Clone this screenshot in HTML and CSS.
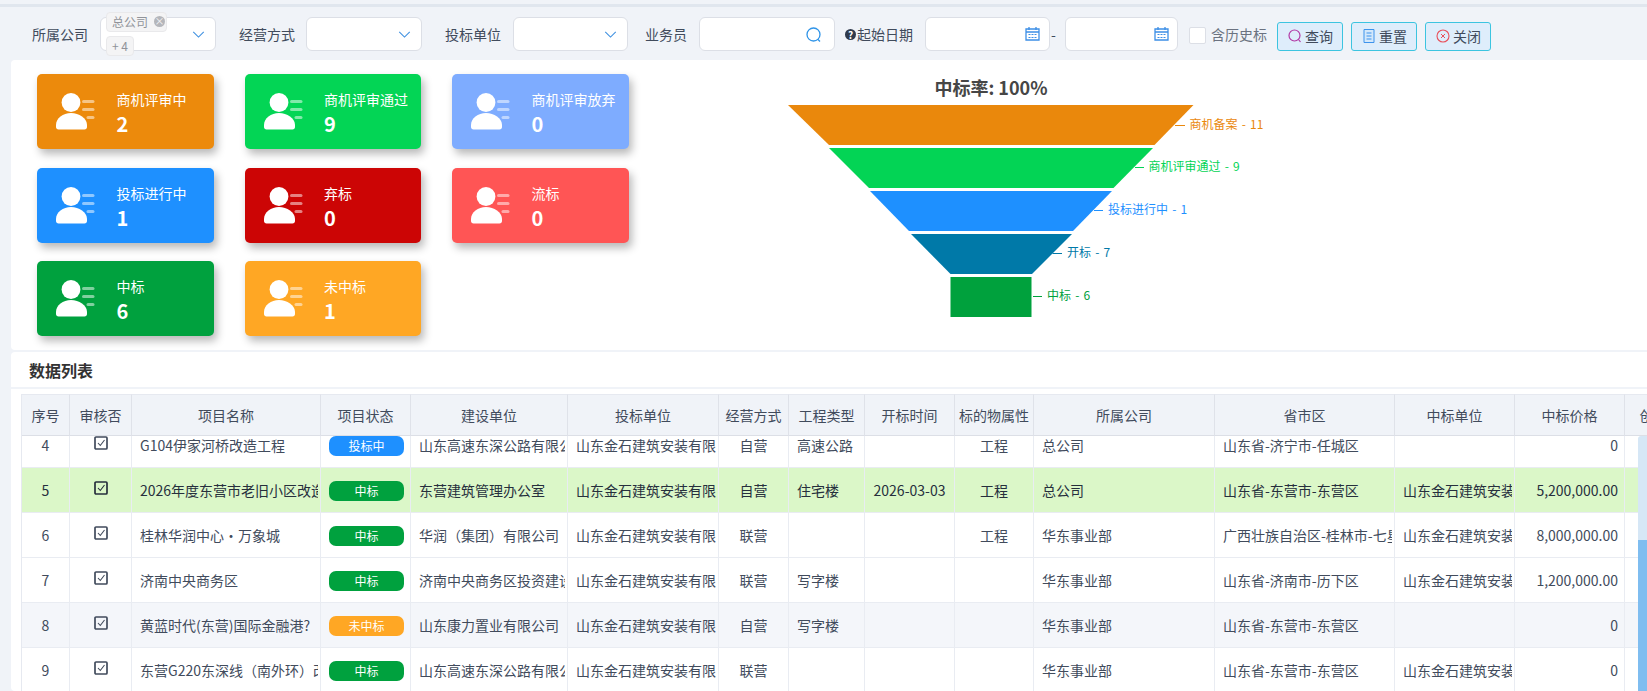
FILE: index.html
```html
<!DOCTYPE html>
<html lang="zh-CN">
  <head>
    <meta charset="utf-8" />
    <title>商机统计</title>
    <meta name="viewport" content="width=device-width, initial-scale=1" />
    <link rel="stylesheet" href="styles.css">
  </head>
  <body>
    <svg class="defs" width="0" height="0">
      <symbol id="person" viewBox="0 0 39 37">
        <circle cx="15" cy="9.5" r="9.4" fill="#fff" />
        <path d="M0 32C0 25 7 20 15 20s16 5 16 12v2c0 1.500-1 2.500-2.500 2.500H2.500C1 36.500 0 35.500 0 34z" fill="#fff" />
        <rect x="26" y="7" width="12.500" height="3" rx="1.500" fill="#fff" opacity=".5" />
        <rect x="26" y="15" width="12.500" height="3" rx="1.500" fill="#fff" opacity=".5" />
        <rect x="30.500" y="23" width="8" height="3" rx="1.500" fill="#fff" opacity=".5" />
      </symbol>
      <symbol id="chevron" viewBox="0 0 14 8">
        <path d="M1 1l6 6 6-6" fill="none" stroke="currentColor" stroke-width="1.200" />
      </symbol>
      <symbol id="calendar" viewBox="0 0 15 15">
        <path d="M1 3h13v11H1zM1 6h13M4 1v3M11 1v3" fill="none" stroke="#3d8fe6" stroke-width="1.300" />
        <path d="M3.500 8.500h8M3.500 11.500h8" stroke="#3d8fe6" stroke-width="1" stroke-dasharray="2 1" />
      </symbol>
      <symbol id="checked" viewBox="0 0 14 14">
        <rect x="1" y="1" width="12" height="12" rx="1" fill="none" stroke="currentColor" stroke-width="1.700" />
        <path d="M4 7l2.300 2.500L10.500 4" fill="none" stroke="currentColor" stroke-width="1.100" />
      </symbol>
    </svg>

    <div class="topline"></div>

    <form class="filters">
      <label class="flabel w-company">所属公司</label>
      <div class="field select multi">
        <span class="tag tag-first">总公司<i class="tag-x">×</i></span>
        <span class="tag tag-more">+ 4</span>
        <svg class="chevron"><use href="#chevron" /></svg>
      </div>
      <label class="flabel w-mode">经营方式</label>
      <div class="field select mode"><svg class="chevron"><use href="#chevron" /></svg></div>
      <label class="flabel w-bid">投标单位</label>
      <div class="field select bid"><svg class="chevron"><use href="#chevron" /></svg></div>
      <label class="flabel w-sales">业务员</label>
      <div class="field sales">
        <svg class="field-icon" width="16" height="16" viewBox="0 0 16 16">
          <circle cx="7.500" cy="7.500" r="6.500" fill="none" stroke="#2f94e8" stroke-width="1.300" />
          <path d="M12 12.500l2 2" stroke="#2f94e8" stroke-width="1.300" />
        </svg>
      </div>
      <span class="help">?</span>
      <label class="flabel w-date">起始日期</label>
      <div class="field date1"><svg class="field-icon" width="15" height="15"><use href="#calendar" /></svg></div>
      <span class="dash">-</span>
      <div class="field date2"><svg class="field-icon" width="15" height="15"><use href="#calendar" /></svg></div>
      <span class="check-box"></span>
      <span class="check-label">含历史标</span>
      <button type="button" class="btn">
        <svg width="14" height="14" viewBox="0 0 14 14"><circle cx="6.500" cy="6.500" r="5.500" fill="none" stroke="#b23aa6" stroke-width="1.200" /><path d="M10.500 10.500l2 2.500" stroke="#b23aa6" stroke-width="1.200" /></svg>查询
      </button>
      <button type="button" class="btn">
        <svg width="14" height="14" viewBox="0 0 14 14"><path d="M2 .5h10v13H2z" fill="#d3e8fb" stroke="#3d93ec" /><path d="M4.500 4h5M4.500 7h5M4.500 10h5" stroke="#3d93ec" /></svg>重置
      </button>
      <button type="button" class="btn">
        <svg width="14" height="14" viewBox="0 0 14 14"><circle cx="7" cy="7" r="6" fill="none" stroke="#e8505b" stroke-width="1.100" /><path d="M5 5l4 4M9 5l-4 4" stroke="#e8505b" /></svg>关闭
      </button>
    </form>

    <section class="panel stats">
      <div class="cards">
        <div class="card c-orange"><svg class="card-icon"><use href="#person" /></svg><div class="card-text"><div class="card-title">商机评审中</div><div class="card-num">2</div></div></div>
        <div class="card c-green"><svg class="card-icon"><use href="#person" /></svg><div class="card-text"><div class="card-title">商机评审通过</div><div class="card-num">9</div></div></div>
        <div class="card c-sky"><svg class="card-icon"><use href="#person" /></svg><div class="card-text"><div class="card-title">商机评审放弃</div><div class="card-num">0</div></div></div>
        <div class="card c-blue"><svg class="card-icon"><use href="#person" /></svg><div class="card-text"><div class="card-title">投标进行中</div><div class="card-num">1</div></div></div>
        <div class="card c-red"><svg class="card-icon"><use href="#person" /></svg><div class="card-text"><div class="card-title">弃标</div><div class="card-num">0</div></div></div>
        <div class="card c-coral"><svg class="card-icon"><use href="#person" /></svg><div class="card-text"><div class="card-title">流标</div><div class="card-num">0</div></div></div>
        <div class="card c-win"><svg class="card-icon"><use href="#person" /></svg><div class="card-text"><div class="card-title">中标</div><div class="card-num">6</div></div></div>
        <div class="card c-amber"><svg class="card-icon"><use href="#person" /></svg><div class="card-text"><div class="card-title">未中标</div><div class="card-num">1</div></div></div>
      </div>

      <!-- funnel: viewBox uses page coordinates -->
      <svg class="funnel" width="1017" height="290" viewBox="630 60 1017 290">
        <text class="funnel-title" x="991" y="95" text-anchor="middle">中标率: 100%</text>
        <polygon points="788,105 1193.500,105 1154.500,145 829,145" fill="#ea880c" />
        <polygon points="829,148 1153,148 1113.500,188 869,188" fill="#03d455" />
        <polygon points="870,191 1112,191 1073,231 909,231" fill="#1e90ff" />
        <polygon points="911,234 1072,234 1032,274 950.500,274" fill="#0079a8" />
        <rect x="950.500" y="277" width="81" height="40" fill="#00a13d" />
        <g class="funnel-label">
          <path d="M1175 125.500h10" stroke="#ea880c" /><text x="1189.500" y="129" fill="#ea880c">商机备案 - 11</text>
          <path d="M1135 167.500h9" stroke="#03d455" /><text x="1148.500" y="171" fill="#03d455">商机评审通过 - 9</text>
          <path d="M1094 210.500h9" stroke="#1e90ff" /><text x="1108" y="214" fill="#1e90ff">投标进行中 - 1</text>
          <path d="M1052.500 253.500h9.500" stroke="#0079a8" /><text x="1067" y="257" fill="#0079a8">开标 - 7</text>
          <path d="M1033 296.500h9" stroke="#00a13d" /><text x="1047" y="300" fill="#00a13d">中标 - 6</text>
        </g>
      </svg>
    </section>

    <section class="panel list">
      <h3 class="list-title">数据列表</h3>
      <div class="grid">
        <table class="grid-table">
          <colgroup>
            <col class="c1" /><col class="c2" /><col class="c3" /><col class="c4" /><col class="c5" /><col class="c6" /><col class="c7" /><col class="c8" /><col class="c9" /><col class="c10" /><col class="c11" /><col class="c12" /><col class="c13" /><col class="c14" /><col class="c15" />
          </colgroup>
          <thead>
            <tr>
              <th>序号</th><th>审核否</th><th>项目名称</th><th>项目状态</th><th>建设单位</th><th>投标单位</th><th>经营方式</th><th>工程类型</th><th>开标时间</th><th>标的物属性</th><th>所属公司</th><th>省市区</th><th>中标单位</th><th>中标价格</th><th>创建时间</th>
            </tr>
          </thead>
        </table>
        <div class="grid-body">
          <table class="grid-table scrolled">
            <colgroup>
              <col class="c1" /><col class="c2" /><col class="c3" /><col class="c4" /><col class="c5" /><col class="c6" /><col class="c7" /><col class="c8" /><col class="c9" /><col class="c10" /><col class="c11" /><col class="c12" /><col class="c13" /><col class="c14" /><col class="c15" />
            </colgroup>
            <tbody>
              <tr>
                <td class="mid">4</td><td class="mid"><svg class="tick"><use href="#checked" /></svg></td><td>G104伊家河桥改造工程</td><td class="mid"><span class="badge b-blue">投标中</span></td><td>山东高速东深公路有限公司</td><td>山东金石建筑安装有限公司</td><td class="mid">自营</td><td>高速公路</td><td class="mid"></td><td class="mid">工程</td><td>总公司</td><td>山东省-济宁市-任城区</td><td></td><td class="num">0</td><td></td>
              </tr>
              <tr class="current">
                <td class="mid">5</td><td class="mid"><svg class="tick"><use href="#checked" /></svg></td><td>2026年度东营市老旧小区改造工程</td><td class="mid"><span class="badge b-green">中标</span></td><td>东营建筑管理办公室</td><td>山东金石建筑安装有限公司</td><td class="mid">自营</td><td>住宅楼</td><td class="mid">2026-03-03</td><td class="mid">工程</td><td>总公司</td><td>山东省-东营市-东营区</td><td>山东金石建筑安装有限公司</td><td class="num">5,200,000.00</td><td></td>
              </tr>
              <tr>
                <td class="mid">6</td><td class="mid"><svg class="tick"><use href="#checked" /></svg></td><td>桂林华润中心・万象城</td><td class="mid"><span class="badge b-green">中标</span></td><td>华润（集团）有限公司</td><td>山东金石建筑安装有限公司</td><td class="mid">联营</td><td></td><td class="mid"></td><td class="mid">工程</td><td>华东事业部</td><td>广西壮族自治区-桂林市-七星区</td><td>山东金石建筑安装有限公司</td><td class="num">8,000,000.00</td><td></td>
              </tr>
              <tr>
                <td class="mid">7</td><td class="mid"><svg class="tick"><use href="#checked" /></svg></td><td>济南中央商务区</td><td class="mid"><span class="badge b-green">中标</span></td><td>济南中央商务区投资建设有限公司</td><td>山东金石建筑安装有限公司</td><td class="mid">联营</td><td>写字楼</td><td class="mid"></td><td class="mid"></td><td>华东事业部</td><td>山东省-济南市-历下区</td><td>山东金石建筑安装有限公司</td><td class="num">1,200,000.00</td><td></td>
              </tr>
              <tr class="stripe">
                <td class="mid">8</td><td class="mid"><svg class="tick"><use href="#checked" /></svg></td><td>黄蓝时代(东营)国际金融港?</td><td class="mid"><span class="badge b-amber">未中标</span></td><td>山东康力置业有限公司</td><td>山东金石建筑安装有限公司</td><td class="mid">自营</td><td>写字楼</td><td class="mid"></td><td class="mid"></td><td>华东事业部</td><td>山东省-东营市-东营区</td><td></td><td class="num">0</td><td></td>
              </tr>
              <tr>
                <td class="mid">9</td><td class="mid"><svg class="tick"><use href="#checked" /></svg></td><td>东营G220东深线（南外环）改建工程</td><td class="mid"><span class="badge b-green">中标</span></td><td>山东高速东深公路有限公司</td><td>山东金石建筑安装有限公司</td><td class="mid">联营</td><td></td><td class="mid"></td><td class="mid"></td><td>华东事业部</td><td>山东省-东营市-东营区</td><td>山东金石建筑安装有限公司</td><td class="num">0</td><td></td>
              </tr>
            </tbody>
          </table>
          <div class="scroll-track"><div class="scroll-thumb"></div></div>
        </div>
      </div>
    </section>
  </body>
</html>
```

FILE: styles.css
```css
html,
body {
  height: 691px;
  overflow: hidden;
}
body {
  margin: 0;
  background: #f0f3f8;
  font-family: "Noto Sans CJK SC", "Noto Sans", sans-serif;
  font-size: 14px;
  color: #414b5c;
}
.defs {
  position: absolute;
}
.topline {
  height: 3px;
  margin-top: 4px;
  background: #e0e6ee;
}

/* filter bar */
.filters {
  display: flex;
  align-items: flex-start;
  height: 53px;
  padding: 10px 0 0 32px;
  box-sizing: border-box;
}
.flabel {
  line-height: 34px;
  white-space: nowrap;
}
.w-company { margin-right: 12px; }
.w-mode { margin: 0 11px 0 23px; }
.w-bid { margin: 0 12px 0 23px; }
.w-sales { margin: 0 12px 0 17px; }
.field {
  position: relative;
  height: 34px;
  box-sizing: border-box;
  background: #fff;
  border: 1px solid #dcdfe6;
  border-radius: 6px;
  flex: none;
}
.multi { width: 116px; }
.mode { width: 116px; }
.bid { width: 115px; }
.sales { width: 136px; }
.date1 { width: 125px; margin-left: 12px; }
.date2 { width: 113px; }
.chevron {
  position: absolute;
  right: 10px;
  top: 13px;
  width: 13px;
  height: 7px;
  color: #3d8fe0;
}
.field-icon {
  position: absolute;
  top: 9px;
  right: 11px;
}
.sales .field-icon { right: 12px; }
.date1 .field-icon { right: 9px; top: 8px; }
.date2 .field-icon { right: 8px; top: 8px; }
.tag {
  position: absolute;
  left: 5px;
  box-sizing: border-box;
  height: 20px;
  line-height: 18px;
  font-size: 12px;
  color: #909399;
  background: #f4f4f5;
  border: 1px solid #e9e9eb;
  border-radius: 4px;
}
.tag-first {
  top: -6px;
  width: 61px;
  padding-left: 5px;
}
.tag-more {
  top: 18px;
  width: 28px;
  text-align: center;
}
.tag-x {
  position: absolute;
  right: 1px;
  top: 3px;
  width: 11px;
  height: 11px;
  line-height: 10px;
  font-size: 10px;
  font-style: normal;
  text-align: center;
  color: #f4f4f5;
  background: #b4b6bb;
  border-radius: 50%;
}
.help {
  flex: none;
  width: 11px;
  height: 11px;
  margin: 12px 1px 0 10px;
  line-height: 11px;
  font-size: 10px;
  font-weight: 700;
  text-align: center;
  color: #fff;
  background: #2f3a4c;
  border-radius: 50%;
}
.dash {
  width: 15px;
  line-height: 34px;
  padding-left: 1px;
  box-sizing: border-box;
}
.check-box {
  flex: none;
  width: 17px;
  height: 17px;
  margin: 10px 5px 0 11px;
  box-sizing: border-box;
  background: #fff;
  border: 1px solid #dcdfe6;
  border-radius: 2px;
}
.check-label {
  line-height: 35px;
  color: #6b7280;
  white-space: nowrap;
  margin-right: 10px;
}
.btn {
  display: flex;
  align-items: center;
  justify-content: center;
  gap: 3px;
  flex: none;
  width: 66px;
  height: 29px;
  margin: 5px 8px 0 0;
  padding: 0 0 2px 1px;
  font: inherit;
  color: #414b5c;
  background: #deedfb;
  border: 1px solid #3cc4e0;
  border-radius: 3px;
}

/* panels */
.panel {
  margin-left: 11px;
  background: #fff;
  border-radius: 4px 0 0 4px;
}
.stats {
  display: flex;
  height: 290px;
  margin-bottom: 2px;
}
.cards {
  display: grid;
  grid-template-columns: repeat(3, 176.5px);
  grid-auto-rows: 75px;
  gap: 18.5px 31px;
  align-content: start;
  flex: none;
  width: 593px;
  padding: 14px 0 0 26px;
}
.card {
  display: flex;
  align-items: center;
  gap: 21.5px;
  padding-left: 19px;
  color: #fff;
  border-radius: 5px;
  box-shadow: 3px 5px 9px rgba(0, 0, 0, 0.28);
}
.card-icon {
  flex: none;
  width: 39px;
  height: 37px;
}
.card-text {
  padding-top: 5px;
  white-space: nowrap;
}
.card-title {
  line-height: 20px;
}
.card-num {
  line-height: 30px;
  font-size: 20px;
  font-weight: 700;
}
.c-orange { background: #ec8a0c; }
.c-green { background: #03d555; }
.c-sky { background: #7eacff; }
.c-blue { background: #1e90ff; }
.c-red { background: #cc0505; }
.c-coral { background: #ff5555; }
.c-win { background: #00a13e; }
.c-amber { background: #ffa724; }

.funnel {
  flex: none;
}
.funnel-title {
  font-size: 18px;
  font-weight: 700;
  fill: #464646;
}
.funnel-label {
  font-size: 12px;
  word-spacing: 1.5px;
}

/* data table */
.list {
  height: 339px;
  overflow: hidden;
}
.list-title {
  margin: 0;
  height: 35px;
  padding-left: 18px;
  line-height: 36px;
  font-size: 16px;
  font-weight: 700;
  color: #333;
  border-bottom: 2px solid #f0f3f8;
  box-sizing: content-box;
}
.grid {
  margin: 5px 0 0 10px;
  overflow: hidden;
  border-left: 1px solid #e6e9f0;
}
.grid-table {
  table-layout: fixed;
  width: 1689px;
  border-collapse: separate;
  border-spacing: 0;
}
.c1 { width: 48px; }
.c2 { width: 62px; }
.c3 { width: 189px; }
.c4 { width: 90px; }
.c5 { width: 157px; }
.c6 { width: 151px; }
.c7 { width: 70px; }
.c8 { width: 76px; }
.c9 { width: 90px; }
.c10 { width: 79px; }
.c11 { width: 181px; }
.c12 { width: 180px; }
.c13 { width: 120px; }
.c14 { width: 110px; }
.c15 { width: 86px; }
th {
  height: 40px;
  padding: 0;
  font-weight: 400;
  color: #414b5c;
  background: #f0f3f8;
  border-top: 1px solid #e6e9f0;
  border-right: 1px solid #dfe2e9;
  border-bottom: 1px solid #dcdfe6;
  white-space: nowrap;
  overflow: hidden;
}
td {
  position: relative;
  height: 44px;
  padding: 0 1px 0 8px;
  box-sizing: border-box;
  background: #fff;
  border-right: 1px solid #e9ecf2;
  border-bottom: 1px solid #e9ecf2;
  white-space: nowrap;
  overflow: hidden;
}
/* keeps clipped text off the column rule */
td::after {
  content: "";
  position: absolute;
  top: 0;
  right: 0;
  bottom: 0;
  width: 2px;
  background: inherit;
}
tbody tr {
  height: 45px;
}
td.mid {
  padding-left: 1px;
  text-align: center;
}
td.num {
  padding-right: 6px;
  text-align: right;
}
.current td {
  color: #262f3d;
  background: #dbf7c8;
}
.stripe td {
  background: #f4f6fa;
}
.tick {
  display: block;
  width: 14px;
  height: 14px;
  margin: -4px auto 0;
}
.badge {
  display: block;
  width: 75px;
  height: 20px;
  margin: 1px 0 0 7px;
  line-height: 20px;
  font-size: 12px;
  color: #fff;
  border-radius: 7px;
}
.b-blue { background: #1e90ff; }
.b-green { background: #00a13e; }
.b-amber { background: #ffa724; }

.grid-body {
  position: relative;
  height: 257px;
  overflow: hidden;
}
.scrolled {
  margin-top: -13px;
}
.scroll-track {
  position: absolute;
  top: 0;
  right: 0;
  bottom: 0;
  width: 9px;
  background: #d6e7f6;
  border-radius: 3px 0 0 0;
}
.scroll-thumb {
  height: 153px;
  margin-top: 104px;
  background: #7fbdf0;
}
```
